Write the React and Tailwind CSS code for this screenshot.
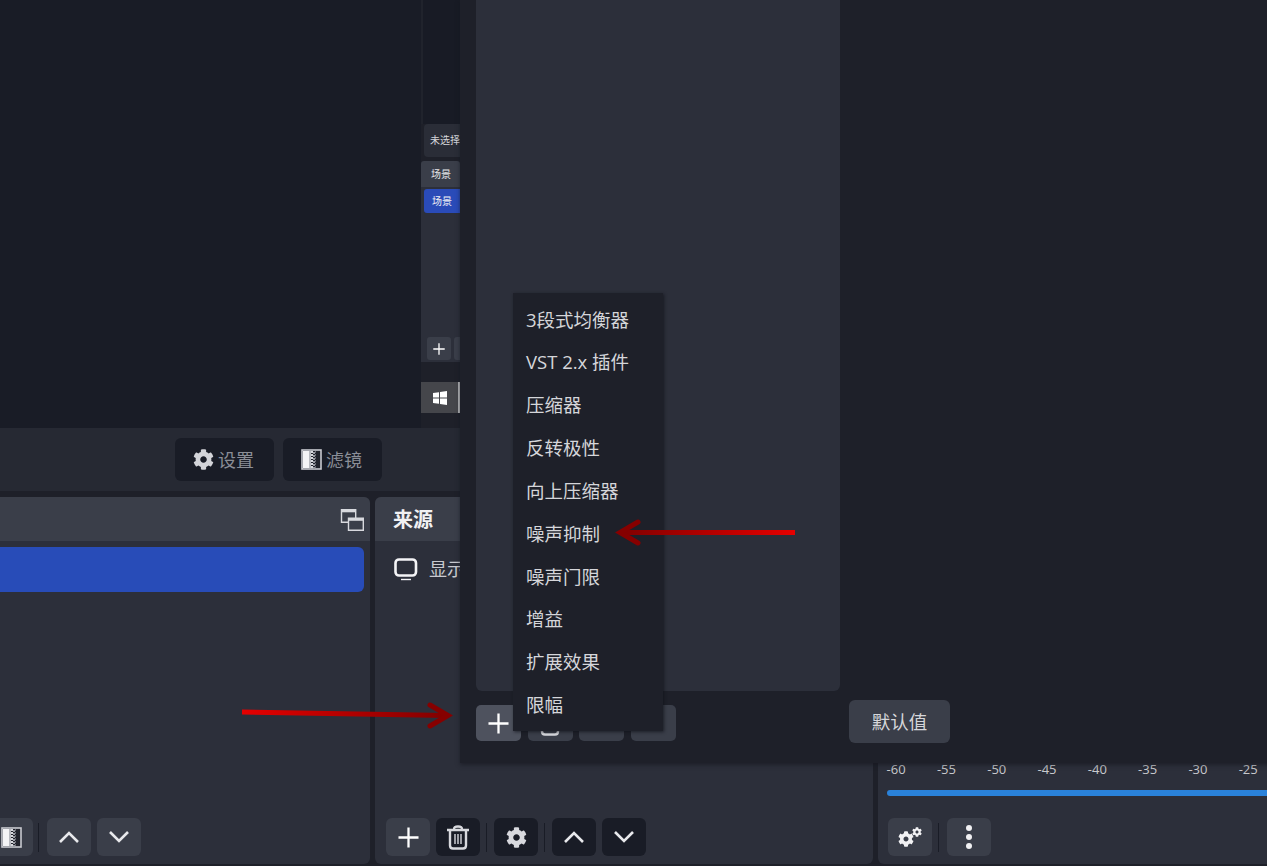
import React from "react";
import { FaCog } from "react-icons/fa";

const fontStack = { fontFamily: '"Open Sans", "Noto Sans CJK SC", sans-serif' };

const PlusIcon = ({ size = 22 }) => (
  <svg width={size} height={size} viewBox="0 0 22 22" fill="none" stroke="#ffffff" strokeWidth="2.4">
    <path d="M0.5 11H21.5M11 0.5V21.5" />
  </svg>
);

const ChevronUp = () => (
  <svg width="20" height="12" viewBox="0 0 20 12" fill="none" stroke="#e8e9ec" strokeWidth="2.6">
    <path d="M1 11L10 2L19 11" />
  </svg>
);

const ChevronDown = () => (
  <svg width="20" height="12" viewBox="0 0 20 12" fill="none" stroke="#e8e9ec" strokeWidth="2.6">
    <path d="M1 1L10 10L19 1" />
  </svg>
);

const TrashIcon = () => (
  <svg width="22" height="25" viewBox="0 0 22 25" fill="none" stroke="#d8d9de" strokeWidth="2.4">
    <path d="M0 5H22M7 4.5C7 2 8 1.5 11 1.5C14 1.5 15 2 15 4.5" />
    <path d="M3 5V20.5C3 22.5 4 23.5 6 23.5H16C18 23.5 19 22.5 19 20.5V5" />
    <path d="M8 9V19M11 9V19M14 9V19" strokeWidth="1.4" />
  </svg>
);

// white strip on the left, then a dither that fades out to the right
const ditherRows = [2, 5, 8, 11, 14, 17];
const FilterIcon = () => (
  <svg width="21" height="21" viewBox="0 0 21 21">
    <rect x="1" y="1" width="19" height="19" fill="#22242d" stroke="#c9cad0" strokeWidth="1.6" />
    <rect x="2" y="2" width="6" height="17" fill="#f4f4f6" />
    <rect x="8" y="2" width="2" height="17" fill="#b8bac0" />
    {ditherRows.map((y) => (
      <g key={y}>
        <rect x="10" y={y} width="2" height="2" fill="#d8d9de" />
        <rect x="12" y={y + 1} width="2" height="2" fill="#9a9ca4" />
        <rect x="14" y={y} width="1" height="2" fill="#6a6c75" />
      </g>
    ))}
  </svg>
);

const WindowsIcon = () => (
  <svg width="14" height="14" viewBox="0 0 14 14" fill="#ffffff">
    <path d="M0 2L6 1.2V6.6H0ZM7 1L14 0V6.6H7ZM0 7.6H6V12.8L0 12ZM7 7.6H14V14L7 13Z" />
  </svg>
);

const SwitchIcon = () => (
  <svg width="24" height="24" viewBox="0 0 24 24" fill="none" stroke="#d8d9de" strokeWidth="1.4">
    <path d="M1.5 2.7H15.7V15.2H1.5Z" />
    <path d="M1.5 4H15.7" strokeWidth="2.6" />
    <path d="M8.5 11.2H23.3V23.3H8.5Z" fill="#3a3e49" />
    <path d="M8.5 12.5H23.3" strokeWidth="2.6" />
  </svg>
);

const MonitorIcon = () => (
  <svg width="24" height="23" viewBox="0 0 24 23" fill="none" stroke="#f4f4f6">
    <rect x="1.5" y="1.5" width="20.5" height="16" rx="3.5" strokeWidth="2.6" />
    <path d="M7 21.5H17" strokeWidth="1.4" />
  </svg>
);

const GearsIcon = () => (
  <div className="relative w-[24px] h-[20px]">
    <FaCog className="absolute left-0 bottom-0 text-[16px] text-[#f1f1f3]" />
    <FaCog className="absolute right-0 top-0 text-[10px] text-[#f1f1f3]" />
  </div>
);

const DotsIcon = () => (
  <div className="flex flex-col gap-[3px]">
    <div className="w-[6px] h-[6px] rounded-full bg-[#f1f1f3]" />
    <div className="w-[6px] h-[6px] rounded-full bg-[#f1f1f3]" />
    <div className="w-[6px] h-[6px] rounded-full bg-[#f1f1f3]" />
  </div>
);

const ToolButton = ({ dark, children }) => (
  <div className={`w-[44px] h-[38px] shrink-0 rounded-[6px] flex items-center justify-center ${dark ? "bg-[#191c26]" : "bg-[#3a3e49]"}`}>
    {children}
  </div>
);

const Separator = () => <div className="w-[1px] h-[29px] shrink-0 bg-[#191c26] mr-[1px]" />;

const RedArrow = ({ id, className, width, height, line, head, flip }) => (
  <svg className={className} width={width} height={height} viewBox={`0 0 ${width} ${height}`} fill="none">
    <defs>
      <linearGradient id={id} gradientUnits="userSpaceOnUse" x1={flip ? width : 0} x2={flip ? 0 : width} y1="0" y2="0">
        <stop offset="0" stopColor="#e60000" />
        <stop offset="1" stopColor="#7d0000" />
      </linearGradient>
    </defs>
    <path d={line} stroke={`url(#${id})`} strokeWidth="5" />
    <path d={head} stroke="#860000" strokeWidth="5" strokeLinecap="round" strokeLinejoin="miter" />
  </svg>
);

const menuItems = ["3段式均衡器", "VST 2.x 插件", "压缩器", "反转极性", "向上压缩器", "噪声抑制", "噪声门限", "增益", "扩展效果", "限幅"];
const meterLabels = ["-60", "-55", "-50", "-45", "-40", "-35", "-30", "-25"];

export default function App() {
  return (
    <div className="relative w-[1267px] h-[866px] overflow-hidden bg-[#1e2029] flex flex-col" style={fontStack}>
      {/* preview with the small window caught in it */}
      <div className="h-[428px] flex shrink-0">
        <div className="w-[421px] bg-[#191c26]" />
        <div className="w-[39px] flex flex-col overflow-hidden bg-[#1e2029]">
          <div className="h-[124px] bg-[#181b25] border-l-[2px] border-[#20232c]" />
          <div className="h-[33px] ml-[3px] w-[50px] rounded-[4px] bg-[#2a2d37] flex items-center pl-[6px] text-[10px] text-[#d5d6da] whitespace-nowrap">未选择</div>
          <div className="h-[26px] mt-[4px] bg-[#3a3e49] rounded-t-[3px] flex items-center pl-[10px] text-[10px] text-[#e6e7ea] whitespace-nowrap">场景</div>
          <div className="h-[175px] bg-[#2c2f3a] flex flex-col pl-[3px] pt-[2px]">
            <div className="h-[24px] w-[50px] rounded-[3px] bg-[#2a4bb8] flex items-center pl-[8px] text-[10px] text-[#f0f1f5]">场景</div>
            <div className="flex gap-[3px] mt-[124px] ml-[3px]">
              <div className="w-[24px] h-[23px] shrink-0 rounded-[3px] bg-[#3a3e49] flex items-center justify-center">
                <PlusIcon size={12} />
              </div>
              <div className="w-[24px] h-[23px] shrink-0 rounded-[3px] bg-[#3a3e49]" />
            </div>
          </div>
          <div className="h-[31px] mt-[20px] bg-[#45464b] flex items-center pl-[12px] relative">
            <WindowsIcon />
            <div className="absolute right-0 top-0 w-[2px] h-full bg-[#b5b6b8]" />
          </div>
        </div>
      </div>

      {/* settings and filters */}
      <div className="h-[63px] shrink-0 bg-[#262933] flex gap-[9px] pl-[175px] pt-[10px]">
        <div className="w-[99px] h-[43px] rounded-[6px] bg-[#191c26] flex items-center justify-center gap-[4px] pr-[2px] text-[18px] text-[#8b8e97]">
          <FaCog className="text-[21px] text-[#d3d4d9]" />
          <span className="pt-[2px]">设置</span>
        </div>
        <div className="w-[99px] h-[43px] rounded-[6px] bg-[#191c26] flex items-center justify-center gap-[4px] pr-[2px] text-[18px] text-[#8b8e97]">
          <FilterIcon />
          <span className="pt-[2px]">滤镜</span>
        </div>
      </div>

      {/* docks */}
      <div className="h-[367px] mt-[6px] shrink-0 flex gap-[5px]">
        <div className="w-[370px] shrink-0 bg-[#2c2f3a] rounded-r-[6px] flex flex-col overflow-hidden">
          <div className="h-[44px] shrink-0 bg-[#3a3e49] flex items-center justify-end pr-[6px]">
            <SwitchIcon />
          </div>
          <div className="h-[45px] w-[364px] mt-[6px] rounded-r-[6px] bg-[#284cb8]" />
          <div className="mt-auto mb-[8px] flex items-center pl-[47px] gap-[6px] relative">
            <div className="absolute left-[-11px]">
              <ToolButton><FilterIcon /></ToolButton>
            </div>
            <div className="absolute left-[38px] w-[1px] h-[29px] bg-[#191c26]" />
            <ToolButton><ChevronUp /></ToolButton>
            <ToolButton><ChevronDown /></ToolButton>
          </div>
        </div>

        <div className="w-[498px] shrink-0 bg-[#2c2f3a] rounded-[6px] flex flex-col overflow-hidden">
          <div className="h-[44px] shrink-0 bg-[#3a3e49] flex items-center pl-[18px] pt-[1px] text-[20px] font-bold text-[#f1f1f3]">来源</div>
          <div className="flex items-center h-[44px] mt-[6px] pl-[19px] gap-[11px] text-[18px] text-[#c9cad0]">
            <MonitorIcon />
            <span>显示器采集</span>
          </div>
          <div className="mt-auto mb-[8px] flex items-center pl-[11px] gap-[6px]">
            <ToolButton><PlusIcon size={21} /></ToolButton>
            <ToolButton dark><TrashIcon /></ToolButton>
            <Separator />
            <ToolButton dark><FaCog className="text-[21px] text-[#d8d9de]" /></ToolButton>
            <Separator />
            <ToolButton dark><ChevronUp /></ToolButton>
            <ToolButton dark><ChevronDown /></ToolButton>
          </div>
        </div>

        <div className="flex-1 bg-[#2c2f3a] rounded-l-[6px] flex flex-col overflow-hidden">
          <div className="mt-[263px] flex ml-[-7px] text-[13px] text-[#c8c9cd]">
            {meterLabels.map((label) => (
              <span key={label} className="w-[50.3px] shrink-0 text-center">{label}</span>
            ))}
          </div>
          <div className="h-[6px] ml-[9px] mt-[10px] rounded-l-full bg-[#2a82da]" />
          <div className="mt-auto mb-[8px] flex items-center pl-[10px] gap-[6px]">
            <ToolButton><GearsIcon /></ToolButton>
            <div className="w-[1px] h-[29px] shrink-0 bg-[#191c26]" />
            <div className="ml-[2px]"><ToolButton><DotsIcon /></ToolButton></div>
          </div>
        </div>
      </div>

      {/* filters dialog on top */}
      <div className="absolute left-[460px] top-0 w-[900px] h-[763px] bg-[#1e2029] shadow-[0_2px_4px_rgba(20,22,30,0.6)] flex pl-[16px]">
        <div className="w-[364px] flex flex-col">
          <div className="h-[691px] rounded-b-[6px] bg-[#2c2f3a]" />
          <div className="mt-[14px] flex gap-[6.5px]">
            <div className="w-[45px] h-[36px] rounded-[5px] bg-[#4e525e] flex items-center justify-center">
              <PlusIcon size={21} />
            </div>
            <div className="w-[45px] h-[36px] rounded-[5px] bg-[#3a3e49] flex items-center justify-center">
              <TrashIcon />
            </div>
            <div className="w-[45px] h-[36px] rounded-[5px] bg-[#3a3e49]" />
            <div className="w-[45px] h-[36px] rounded-[5px] bg-[#3a3e49]" />
          </div>
        </div>
        <div className="w-[101px] h-[43px] ml-[9px] mt-[700px] rounded-[6px] bg-[#3a3e49] flex items-center justify-center text-[18.5px] text-[#d5d6da]">默认值</div>
      </div>

      {/* add filter menu */}
      <div className="absolute left-[513px] top-[293px] w-[150px] h-[438px] bg-[#1e2029] pt-[5px] shadow-[1px_1px_3px_rgba(15,17,24,0.7)]">
        {menuItems.map((item) => (
          <div key={item} className="h-[42.85px] pl-[13px] flex items-center text-[18.5px] text-[#d5d6da] whitespace-nowrap">{item}</div>
        ))}
      </div>

      <RedArrow
        id="arrowAdd"
        className="absolute left-[242px] top-[700px]"
        width={212}
        height={30}
        line="M0 12L205 15.5"
        head="M188 5L206 15.5L188 26"
      />
      <RedArrow
        id="arrowNoise"
        flip
        className="absolute left-[614px] top-[518px]"
        width={182}
        height={30}
        line="M181 14.5H6"
        head="M24 4L6 14.5L24 25"
      />
    </div>
  );
}
